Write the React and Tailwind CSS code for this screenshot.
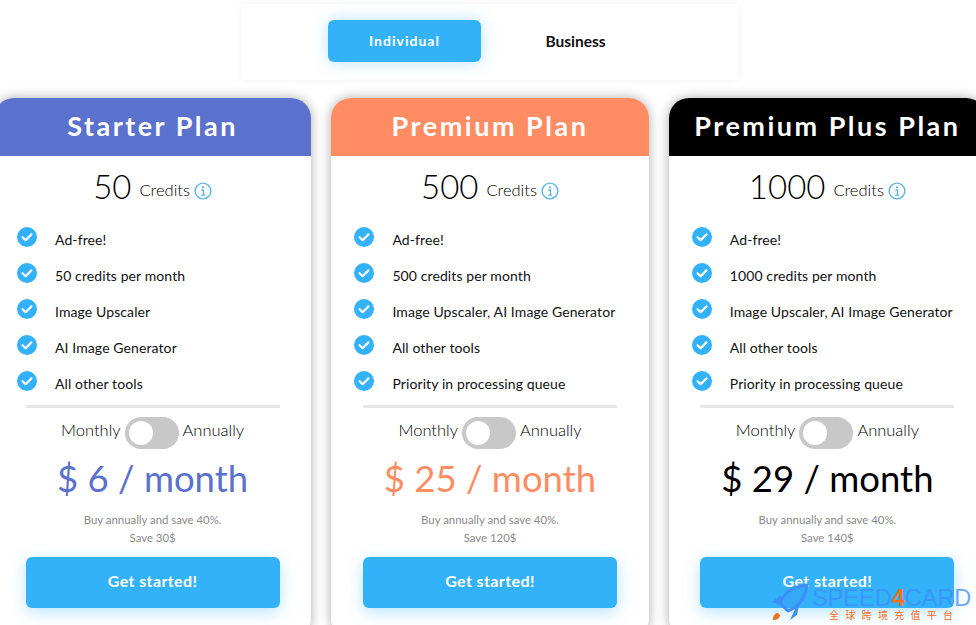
const plans = [
  {
    name: "Starter Plan",
    credits: "50",
    head: "bg-[#5a71cd]",
    price: "text-[#5a71cd]",
    amount: "$ 6 / month",
    save: "Save 30$",
    features: ["Ad-free!", "50 credits per month", "Image Upscaler", "AI Image Generator", "All other tools"],
  },
  {
    name: "Premium Plan",
    credits: "500",
    head: "bg-[#ff8c63]",
    price: "text-[#ff8c63]",
    amount: "$ 25 / month",
    save: "Save 120$",
    features: ["Ad-free!", "500 credits per month", "Image Upscaler, AI Image Generator", "All other tools", "Priority in processing queue"],
  },
  {
    name: "Premium Plus Plan",
    credits: "1000",
    head: "bg-black",
    price: "text-black",
    amount: "$ 29 / month",
    save: "Save 140$",
    features: ["Ad-free!", "1000 credits per month", "Image Upscaler, AI Image Generator", "All other tools", "Priority in processing queue"],
  },
];

const CheckIcon = () => (
  <svg width="20" height="20" viewBox="0 0 20 20" className="shrink-0">
    <circle cx="10" cy="10" r="10" fill="#33b1f9" />
    <path d="M5.6 10.2l3 3 5.8-5.8" fill="none" stroke="#fff" strokeWidth="2.2" strokeLinecap="round" strokeLinejoin="round" />
  </svg>
);

const InfoIcon = () => (
  <svg width="18" height="18" viewBox="0 0 18 18" className="shrink-0">
    <circle cx="9" cy="9" r="7.9" fill="none" stroke="#5ab4e8" strokeWidth="1.4" />
    <circle cx="9" cy="5.3" r="1.1" fill="#5ab4e8" />
    <path d="M7.4 8h2.1v5M7.2 13.2h3.8" fill="none" stroke="#5ab4e8" strokeWidth="1.3" />
  </svg>
);

// site watermark, sits over the bottom right of the page
const Watermark = () => (
  <div className="absolute left-[771px] top-[583px] flex w-[205px]">
    <svg width="38" height="38" viewBox="0 0 38 38" className="shrink-0">
      <path d="M36 2C26 3 17 7 12 14l-3 6 8 8 6-3c7-5 12-13 13-23z" fill="#3d8ef8" fillOpacity="0.25" stroke="#3d8ef8" strokeWidth="3" strokeLinejoin="round" />
      <path d="M10 12L1 19l8 3zM25 24l-6 13 7-5 2-10z" fill="#3d8ef8" />
      <path d="M2 37c0-5 2-7 5-7l2 2c0 3-3 5-7 5z" fill="#f37021" />
    </svg>
    <div className="flex flex-col ml-[3px] mt-[6px]">
      <div className="text-[23.5px] leading-[19px] text-[#3d8ef8]/75 font-['Liberation_Sans',sans-serif] whitespace-nowrap">
        SPEED<span className="text-[#f37021] font-bold">4</span>CARD
      </div>
      <div className="text-[10px] leading-[10px] mt-[2px] ml-[17px] tracking-[6.3px] text-[#f37021] font-['Noto_Sans_CJK_SC',sans-serif] whitespace-nowrap">
        全球跨境充值平台
      </div>
    </div>
  </div>
);

const PlanCard = ({ plan }) => (
  <div className="w-[317.4px] h-[540px] shrink-0 rounded-[20px] bg-white overflow-hidden shadow-[0_0_12px_rgba(0,0,0,0.33)]">
    <div className={`h-[58px] pb-[1px] flex items-center justify-center text-white text-[27px] font-bold tracking-[2.5px] ${plan.head}`}>
      {plan.name}
    </div>
    <div className="h-[62px] flex items-center justify-center">
      <span className="text-[33px] leading-none text-black font-light relative top-[-1px]">{plan.credits}</span>
      <span className="text-[16.5px] ml-[8px] mt-[7px] mr-[4px] text-black font-light">Credits</span>
      <span className="mt-[7px]"><InfoIcon /></span>
    </div>
    <ul className="flex flex-col gap-[16px] pl-[23.1px] mt-[9px]">
      {plan.features.map((f) => (
        <li key={f} className="flex items-center h-[20px]">
          <CheckIcon />
          <span className="ml-[18px] text-[14px] tracking-[0.1px] text-[#111] relative top-[2px] whitespace-nowrap">{f}</span>
        </li>
      ))}
    </ul>
    <div className="h-[3px] bg-[#e6e6e6] mx-[31.7px] mt-[14px]" />
    <div className="flex items-center justify-center mt-[9px] h-[32px] text-[16.5px] text-black font-light">
      <span className="mr-[4px] relative top-[-3px]">Monthly</span>
      <div className="w-[54px] h-[32px] rounded-full bg-[#c8c8c8] flex items-center pl-[4px]">
        <div className="w-[24px] h-[24px] rounded-full bg-white" />
      </div>
      <span className="ml-[4px] relative top-[-3px]">Annually</span>
    </div>
    <div className={`text-center text-[36.5px] leading-[40px] mt-[9px] ${plan.price}`}>{plan.amount}</div>
    <div className="text-center text-[11.4px] leading-[18px] text-[#8a8a8a] mt-[13px]">
      <div>Buy annually and save 40%.</div>
      <div>{plan.save}</div>
    </div>
    <button className="block ml-[31.7px] w-[254px] h-[51px] pb-[3px] mt-[10px] rounded-[6px] bg-[#33b1f9] text-white text-[16px] tracking-[0.4px] font-bold shadow-[0_4px_16px_rgba(51,177,249,0.35)]">
      Get started!
    </button>
  </div>
);

export default function App() {
  return (
    <div className="relative w-[976px] h-[625px] overflow-hidden bg-white font-['Lato',sans-serif]">
      <div className="absolute left-[242px] top-[4px] flex justify-center gap-[18px] w-[496px] h-[76px] pt-[16px] bg-white shadow-[0_0_8px_rgba(0,0,0,0.06)]">
        <button className="w-[153px] h-[42px] pb-[1px] rounded-[6px] bg-[#33b1f9] text-white text-[14px] font-bold tracking-[1px] shadow-[0_0_16px_rgba(51,177,249,0.35)]">
          Individual
        </button>
        <button className="w-[153px] h-[42px] pt-[1px] text-[#111] text-[15.5px] font-bold">Business</button>
      </div>
      <div className="flex gap-[20px] ml-[-6.1px] pt-[98px]">
        {plans.map((p) => (
          <PlanCard key={p.name} plan={p} />
        ))}
      </div>
      <Watermark />
    </div>
  );
}
